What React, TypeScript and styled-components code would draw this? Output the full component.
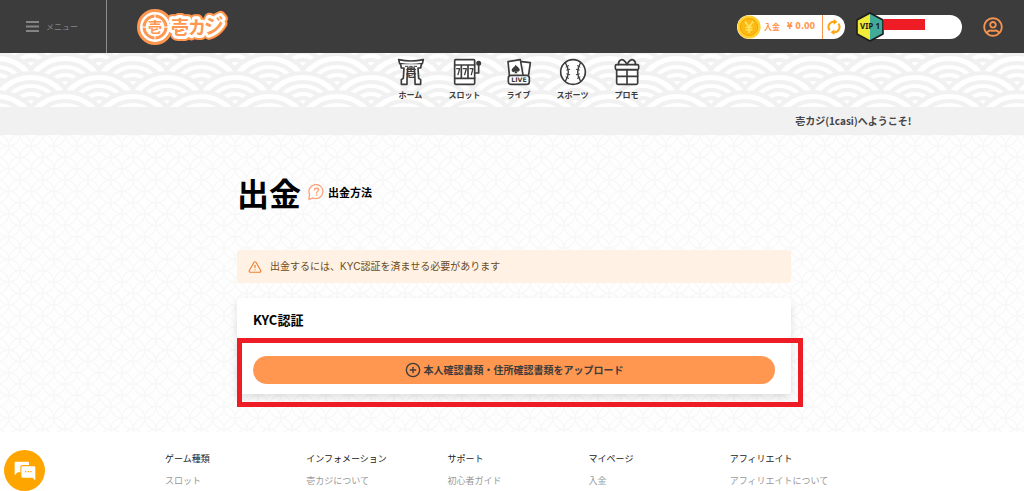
import React from 'react';
import styled, { createGlobalStyle } from 'styled-components';
import { CirclePlus, TriangleAlert } from 'lucide-react';
import { FaRegUserCircle } from 'react-icons/fa';

const orange = '#ff9750';
const ink = '#3c3c3c';
const jp = '"Noto Sans CJK JP", "Noto Sans", sans-serif';

const svgUrl = (body: string, w: number, h: number, box: string) =>
  `url("data:image/svg+xml,${encodeURIComponent(
    `<svg xmlns="http://www.w3.org/2000/svg" width="${w}" height="${h}" viewBox="${box}">${body}</svg>`
  )}")`;

/* Overlapping wave scales, each one a stack of concentric ellipses clipped to its own column. */
const waveScale = (cx: number, top: number) =>
  `<svg x="${cx - 34}" y="${top}" width="68" height="38" viewBox="-34 0 68 38">${[0, 4, 9, 13, 17, 21, 25, 29]
    .map(
      (d, i) =>
        `<ellipse cx="0" cy="36" rx="${43 - d * 1.2}" ry="${36 - d}" fill="${i % 2 ? '#ffffff' : '#f1f1f1'}"/>`
    )
    .join('')}</svg>`;

const waveRows = [-38, -19, 0, 19, 38]
  .map((top, row) =>
    (row % 2 ? [34] : [0, 68]).map((cx) => waveScale(cx, top)).join('')
  )
  .join('');
const waves = svgUrl(waveRows, 68, 38, '0 0 68 38');

/* Interlocking circles, three repeats per tile. */
const rings: string[] = [];
for (let i = 0; i <= 6; i++)
  for (let j = 0; j <= 6; j++)
    if ((i + j) % 2 === 0) rings.push(`<circle cx="${i}" cy="${j}" r="1"/>`);
const shippo = svgUrl(
  `<g fill="none" stroke="#f7f7f7" stroke-width="0.1">${rings.join('')}</g>`,
  68,
  68,
  '0 0 6 6'
);

const GlobalStyle = createGlobalStyle`
  *, *::before, *::after { box-sizing: border-box; }
  body { margin: 0; background: #fff; color: #000; font-family: ${jp}; }
  h1, h2, h3, p, ul { margin: 0; padding: 0; }
  ul { list-style: none; }
  a { color: inherit; text-decoration: none; }
  button { border: 0; padding: 0; background: none; color: inherit; font-family: inherit; cursor: pointer; }
  svg { display: block; flex: none; }
`;

const Header = styled.header`
  display: flex;
  align-items: center;
  height: 53px;
  padding-right: 21px;
  background: ${ink};
`;

const MenuButton = styled.button`
  display: flex;
  align-items: center;
  align-self: stretch;
  gap: 7px;
  width: 107px;
  padding-left: 26px;
  border-right: 1px solid #8c8c8c;
  color: #858585;
  font-size: 8px;
`;

const LogoLink = styled.a`
  margin-left: 30px;
  margin-right: auto;
`;

const Wallet = styled.div`
  display: flex;
  align-items: center;
  width: 108px;
  height: 24px;
  border-radius: 12px;
  background: #fff;
  color: ${orange};
  font-family: "DejaVu Sans", ${jp};
  font-size: 8px;
`;

const DepositLink = styled.a`
  display: flex;
  flex: 1;
  align-items: center;
  gap: 7px;
  padding-left: 3px;
  font-weight: 700;
  line-height: 12px;
`;

const DepositLabel = styled.span`
  font-family: ${jp};
`;

const RefreshButton = styled.button`
  display: flex;
  align-items: center;
  justify-content: center;
  width: 23px;
  height: 24px;
  border-left: 1px solid ${orange};
  color: #ffa30a;
`;

const Member = styled.div`
  display: flex;
  align-items: center;
  width: 106px;
  height: 24px;
  margin-left: 11px;
  border-radius: 12px;
  background: linear-gradient(to right, transparent 14px, #fff 14px);
`;

const Redaction = styled.span`
  width: 41px;
  height: 11px;
  margin-bottom: 4px;
  background: #ee1c24;
`;

const ProfileButton = styled.button`
  margin-left: 21px;
  color: #f49250;
`;

const WaveNav = styled.nav`
  height: 54px;
  padding-left: 13px;
  background: ${waves} 31px 18px;
`;

const NavList = styled.ul`
  display: flex;
  justify-content: center;
  padding-top: 5px;
`;

const NavLink = styled.a`
  display: flex;
  flex-direction: column;
  align-items: center;
  gap: 3px;
  width: 54px;
  color: ${ink};
  font-size: 8px;
  font-weight: 700;
  line-height: 12px;
`;

const Ticker = styled.p`
  padding-right: 11%;
  background: #f1f1f1;
  color: #444;
  font-size: 10px;
  font-weight: 700;
  line-height: 28px;
  text-align: right;
`;

const Main = styled.main`
  padding: 40px 16px 38px 20px;
  background: ${shippo} 20px 11px #fefefe;
`;

const Column = styled.div`
  max-width: 554px;
  margin: 0 auto;
`;

const TitleRow = styled.div`
  display: flex;
  align-items: center;
  gap: 7px;
  height: 34px;
`;

const Title = styled.h1`
  font-size: 32px;
  font-weight: 700;
  line-height: 34px;
`;

const HelpLink = styled.a`
  display: flex;
  align-items: center;
  gap: 3px;
  font-size: 11px;
  font-weight: 700;
  line-height: 16px;
`;

const Notice = styled.div`
  display: flex;
  align-items: center;
  gap: 8px;
  height: 33px;
  margin-top: 41px;
  padding-left: 11px;
  border-radius: 3px;
  background: #fff2e4;
  color: #6b4a22;
  font-family: "Liberation Sans", ${jp};
  font-size: 10px;
  line-height: 14px;
`;

const Card = styled.section`
  position: relative;
  margin-top: 15px;
  padding: 14px 16px 10px;
  border-radius: 3px;
  background: #fff;
  box-shadow: 0 4px 8px rgba(0, 0, 0, 0.12);
`;

const CardTitle = styled.h2`
  font-size: 13px;
  font-weight: 700;
  line-height: 16px;
`;

const UploadButton = styled.button`
  display: flex;
  align-items: center;
  justify-content: center;
  gap: 3px;
  width: 100%;
  height: 28px;
  margin-top: 28px;
  border-radius: 14px;
  background: ${orange};
  color: ${ink};
  font-size: 10px;
  font-weight: 700;
  line-height: 14px;
`;

const Highlight = styled.div`
  position: absolute;
  inset: 40px -12px -13px 0;
  border: 5px solid #ee1c24;
  pointer-events: none;
`;

const Footer = styled.footer`
  padding: 20px 16px 3px;
  background: #fff;
`;

const FooterGrid = styled.div`
  display: grid;
  grid-template-columns: repeat(5, 1fr);
  gap: 12px;
  max-width: 694px;
  margin: 0 auto;
  font-size: 9px;
  line-height: 13px;
`;

const FooterTitle = styled.h3`
  margin-bottom: 9px;
  color: #222;
  font-size: 9px;
  font-weight: 400;
`;

const FooterLink = styled.a`
  color: #999;
`;

const ChatButton = styled.button`
  position: fixed;
  bottom: 0;
  left: 4px;
  display: flex;
  align-items: center;
  justify-content: center;
  width: 41px;
  height: 41px;
  border-radius: 50%;
  background: #ffa500;
`;

const LogoWords = () => (
  <>
    <text x="34" y="26" fontSize="18">壱</text>
    <text x="51" y="26" fontSize="18">カ</text>
    <text x="68" y="26" fontSize="20" transform="rotate(-6 68 26)">ジ</text>
  </>
);

const Logo = () => (
  <svg width="92" height="38" viewBox="0 0 92 38" role="img" aria-label="壱カジ" fontFamily={jp} fontWeight="700">
    <g fill={orange} stroke={orange} strokeWidth="10" strokeLinejoin="round">
      <circle cx="18" cy="19" r="13" />
      <LogoWords />
    </g>
    <g fill="#fff" stroke="#fff" strokeWidth="6" strokeLinejoin="round">
      <circle cx="18" cy="19" r="12" />
      <LogoWords />
    </g>
    <circle cx="18" cy="19" r="11" fill="#fff" stroke={orange} strokeWidth="3" />
    <path d="M18 6v4M18 28v4M5 19h4M27 19h4" stroke="#fff" strokeWidth="1" />
    <g fill={orange}>
      <text x="18" y="24" fontSize="14" textAnchor="middle">壱</text>
      <LogoWords />
    </g>
  </svg>
);

const Coin = () => (
  <svg width="24" height="24" viewBox="0 0 24 24" aria-hidden="true">
    <circle cx="12" cy="12" r="11.6" fill="#ffd02e" />
    <circle cx="12" cy="12" r="8.6" fill="#fdb913" stroke="#f5a400" />
    <path d="M8 6.500l4 5.500 4-5.500M12 12v6M8.500 12.500h7M8.500 15h7" fill="none" stroke="#ffe45c" strokeWidth="1.700" />
  </svg>
);

const RefreshIcon = () => (
  <svg width="14" height="16" viewBox="0 0 42 48" fill="none" stroke="currentColor" strokeWidth="6" aria-hidden="true">
    <path d="M8 34A16 16 0 0 1 21 8M34 14A16 16 0 0 1 21 40" />
    <path d="M20 0L31 8L20 17zM22 31L11 40L22 48z" fill="currentColor" stroke="none" />
  </svg>
);

const VipBadge = () => (
  <svg width="28" height="30" viewBox="0 0 28 30" role="img" aria-label="VIP 1">
    <path d="M14 1L27 8V22L14 29z" fill="#40ab98" />
    <path d="M14 1L1 8V22L14 29z" fill="#efec3a" />
    <path d="M14 1L27 8V22L14 29L1 22V8z" fill="none" stroke="#1c1c1c" strokeWidth="1.600" strokeLinejoin="round" />
    <text x="14" y="17" fontSize="8" fontWeight="700" fontFamily='"Noto Sans", sans-serif' textAnchor="middle" fill="#1c1c1c">
      VIP 1
    </text>
  </svg>
);

const NavIcon = ({ children, box = '-3 -3 84 84' }: { children: React.ReactNode; box?: string }) => (
  <svg width="28" height="28" viewBox={box} overflow="visible" fill="none" stroke={ink} strokeWidth="5" strokeLinejoin="round" strokeLinecap="round" aria-hidden="true">
    {children}
  </svg>
);

const ToriiIcon = () => (
  <NavIcon>
    <path d="M2 2Q39 10 76 2L73 14Q39 20 5 14z" fill="#fff" />
    <path d="M8 16L10 27H18L16 58L10 62V76H27V62L29 27H49L51 62V76H68V62L62 58L60 27H68L70 16" fill="#fff" />
    <path d="M22 22h34" strokeWidth="3" strokeDasharray="8 5" />
    <text x="39" y="54" fontSize="32" fontWeight="700" fontFamily={jp} textAnchor="middle" fill={ink} stroke="none">壱</text>
  </NavIcon>
);

const SlotIcon = () => (
  <NavIcon box="-10 -3 84 84">
    <rect x="1" y="2" width="60" height="74" rx="3" fill="#fff" />
    <path d="M1 18h60M1 58h60M21 18v40M41 18v40M61 42h12V16" />
    <path d="M7 29h9l-5 18M27 29h9l-5 18M47 29h9l-5 18" strokeWidth="4" />
    <circle cx="73" cy="13" r="5" fill={ink} />
  </NavIcon>
);

const LiveIcon = () => (
  <NavIcon box="-6 -3 84 84">
    <path d="M44 8L70 11L65 47" fill="#fff" />
    <path d="M7 47L3 8L40 2L48 47" fill="#fff" />
    <path d="M26 17C22 25 14 27 14 34C14 40 22 41 25 37L22 43H32L28 37C33 40 39 37 38 31C37 25 29 23 26 17z" fill={ink} stroke="none" />
    <rect x="4" y="49" width="63" height="27" rx="8" fill="#fff" />
    <text x="36" y="69" fontSize="19" fontWeight="700" fontFamily='"DejaVu Sans", sans-serif' textAnchor="middle" fill={ink} stroke="none">LIVE</text>
  </NavIcon>
);

const BallIcon = () => (
  <NavIcon>
    <circle cx="39" cy="39" r="37" fill="#fff" />
    <path d="M16 11Q34 39 16 67M62 11Q44 39 62 67" strokeWidth="4" />
    <path d="M18 24l8-4M20 33l9-2M20 45l9 2M18 54l8 4M60 24l-8-4M58 33l-9-2M58 45l-9 2M60 54l-8 4" strokeWidth="3" />
  </NavIcon>
);

const GiftIcon = () => (
  <NavIcon>
    <path d="M8 32h63v40q0 4-4 4H12q-4 0-4-4z" fill="#fff" />
    <rect x="4" y="17" width="70" height="15" rx="4" fill="#fff" />
    <path d="M39 32v44M8 52h63" />
    <path d="M39 17C34 5 26 0 20 3C12 7 14 17 14 17M39 17C44 5 52 0 58 3C66 7 64 17 64 17" />
  </NavIcon>
);

const HelpIcon = () => (
  <svg width="17" height="16" viewBox="0 0 50 48" fill="none" stroke="#ffa27a" strokeWidth="4" strokeLinecap="round" strokeLinejoin="round" aria-hidden="true">
    <path d="M2 46L4 31A21 21 0 1 1 15 42z" />
    <path d="M19 18C19 11 31 11 31 18C31 23 25 22 25 27M25 33v1" />
  </svg>
);

const ChatIcon = () => (
  <svg width="22" height="20" viewBox="0 0 66 60" aria-hidden="true">
    <path d="M4 2H42Q45 2 45 5V12H25Q19 12 19 18V34H11L2 43V5Q2 2 4 2z" fill="#fff" />
    <path d="M26 16H60Q64 16 64 20V58L55 50H26Q22 50 22 46V20Q22 16 26 16z" fill="#fff" />
    <path d="M33 32h4M41 32h4M49 32h4" stroke="#ffa500" strokeWidth="4" />
  </svg>
);

const navItems = [
  { label: 'ホーム', Icon: ToriiIcon },
  { label: 'スロット', Icon: SlotIcon },
  { label: 'ライブ', Icon: LiveIcon },
  { label: 'スポーツ', Icon: BallIcon },
  { label: 'プロモ', Icon: GiftIcon },
];

const footerColumns = [
  { title: 'ゲーム種類', link: 'スロット' },
  { title: 'インフォメーション', link: '壱カジについて' },
  { title: 'サポート', link: '初心者ガイド' },
  { title: 'マイページ', link: '入金' },
  { title: 'アフィリエイト', link: 'アフィリエイトについて' },
];

export default function App() {
  return (
    <>
      <GlobalStyle />
      <Header>
        <MenuButton>
          <svg width="13" height="11" viewBox="0 0 13 11" stroke="currentColor" strokeWidth="2" aria-hidden="true">
            <path d="M0 1h13M0 5.500h13M0 10h13" />
          </svg>
          メニュー
        </MenuButton>
        <LogoLink href="#">
          <Logo />
        </LogoLink>
        <Wallet>
          <Coin />
          <DepositLink href="#">
            <DepositLabel>入金</DepositLabel>
            <span>¥ 0.00</span>
          </DepositLink>
          <RefreshButton aria-label="更新">
            <RefreshIcon />
          </RefreshButton>
        </Wallet>
        <Member>
          <VipBadge />
          <Redaction />
        </Member>
        <ProfileButton aria-label="アカウント">
          <FaRegUserCircle size={20} />
        </ProfileButton>
      </Header>
      <WaveNav>
        <NavList>
          {navItems.map(({ label, Icon }) => (
            <li key={label}>
              <NavLink href="#">
                <Icon />
                {label}
              </NavLink>
            </li>
          ))}
        </NavList>
      </WaveNav>
      <Ticker>壱カジ(1casi)へようこそ!</Ticker>
      <Main>
        <Column>
          <TitleRow>
            <Title>出金</Title>
            <HelpLink href="#">
              <HelpIcon />
              出金方法
            </HelpLink>
          </TitleRow>
          <Notice>
            <TriangleAlert size={14} color="#f08030" />
            出金するには、KYC認証を済ませる必要があります
          </Notice>
          <Card>
            <CardTitle>KYC認証</CardTitle>
            <UploadButton>
              <CirclePlus size={16} />
              本人確認書類・住所確認書類をアップロード
            </UploadButton>
            <Highlight />
          </Card>
        </Column>
      </Main>
      <Footer>
        <FooterGrid>
          {footerColumns.map(({ title, link }) => (
            <div key={title}>
              <FooterTitle>{title}</FooterTitle>
              <FooterLink href="#">{link}</FooterLink>
            </div>
          ))}
        </FooterGrid>
      </Footer>
      <ChatButton aria-label="チャット">
        <ChatIcon />
      </ChatButton>
    </>
  );
}
